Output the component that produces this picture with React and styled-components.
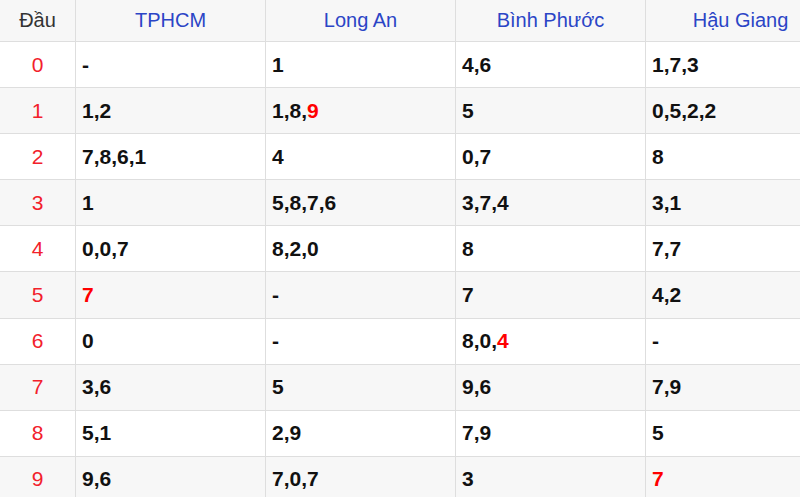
import React from "react";
import styled, { createGlobalStyle } from "styled-components";

const GlobalStyle = createGlobalStyle`
  html, body {
    margin: 0;
    padding: 0;
    background: #fff;
  }
  body {
    font-family: "Liberation Sans", Arial, sans-serif;
  }
`;

const Frame = styled.div`
  width: 800px;
  height: 497px;
  overflow: hidden;
  background: #fff;
`;

const Table = styled.div`
  width: 836px;
`;

const Row = styled.div`
  display: grid;
  grid-template-columns: 76px repeat(4, 190px);
  height: ${({ $head }) => ($head ? "42px" : "46.1px")};
  background: ${({ $striped }) => ($striped ? "#f7f7f7" : "#fff")};
`;

const Cell = styled.div`
  box-sizing: border-box;
  display: flex;
  align-items: center;
  border-right: 1px solid #dedede;
  border-bottom: 1px solid #dedede;
  padding: 0 6px;
  justify-content: ${({ $center }) => ($center ? "center" : "flex-start")};
`;

const HeadText = styled.span`
  font-size: 20px;
  color: ${({ $first }) => ($first ? "#333" : "#2b45c6")};
`;

const Digit = styled.span`
  font-size: 21px;
  color: #f2212b;
`;

const Value = styled.span`
  font-size: 21px;
  font-weight: 700;
  color: #111;
`;

const Hot = styled.span`
  color: #f00;
`;

const provinces = ["TPHCM", "Long An", "Bình Phước", "Hậu Giang"];

// "*" marks the number painted red
const rows = [
  ["-", "1", "4,6", "1,7,3"],
  ["1,2", "1,8,*9", "5", "0,5,2,2"],
  ["7,8,6,1", "4", "0,7", "8"],
  ["1", "5,8,7,6", "3,7,4", "3,1"],
  ["0,0,7", "8,2,0", "8", "7,7"],
  ["*7", "-", "7", "4,2"],
  ["0", "-", "8,0,*4", "-"],
  ["3,6", "5", "9,6", "7,9"],
  ["5,1", "2,9", "7,9", "5"],
  ["9,6", "7,0,7", "3", "*7"],
];

const renderValue = (text) => {
  const i = text.indexOf("*");
  if (i === -1) return text;
  return (
    <>
      {text.slice(0, i)}
      <Hot>{text.slice(i + 1)}</Hot>
    </>
  );
};

const App = () => {
  return (
    <Frame>
      <GlobalStyle />
      <Table>
        <Row $head $striped>
          <Cell $center>
            <HeadText $first>Đầu</HeadText>
          </Cell>
          {provinces.map((p) => (
            <Cell $center key={p}>
              <HeadText>{p}</HeadText>
            </Cell>
          ))}
        </Row>
        {rows.map((row, idx) => (
          <Row key={idx} $striped={idx % 2 === 1}>
            <Cell $center>
              <Digit>{idx}</Digit>
            </Cell>
            {row.map((v, j) => (
              <Cell key={j}>
                <Value>{renderValue(v)}</Value>
              </Cell>
            ))}
          </Row>
        ))}
      </Table>
    </Frame>
  );
};

export default App;
